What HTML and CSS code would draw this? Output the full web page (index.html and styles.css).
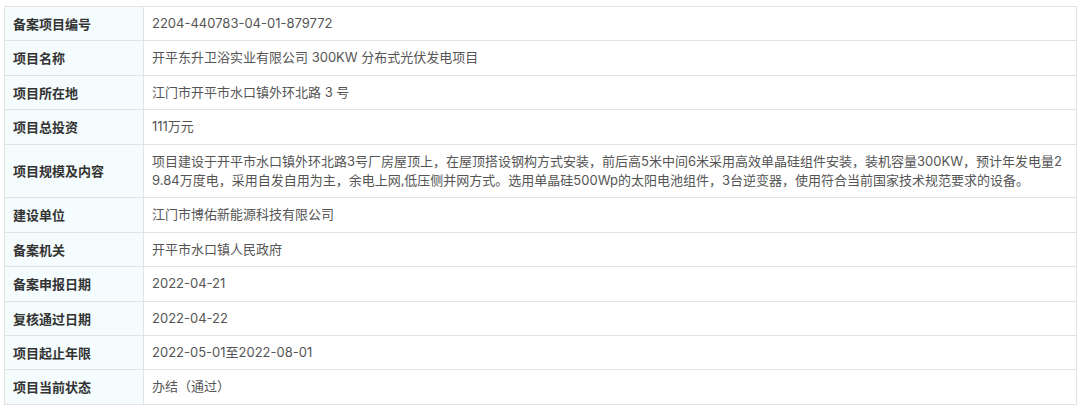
FILE: index.html
```html
<!DOCTYPE html>
<html>
<head>
  <meta charset="utf-8">
  <title>项目备案信息</title>
  <link rel="stylesheet" href="styles.css">
</head>
<body>
  <table class="info">
    <tr><th>备案项目编号</th><td>2204-440783-04-01-879772</td></tr>
    <tr><th>项目名称</th><td>开平东升卫浴实业有限公司 300KW 分布式光伏发电项目</td></tr>
    <tr><th>项目所在地</th><td>江门市开平市水口镇外环北路 3 号</td></tr>
    <tr><th>项目总投资</th><td>111万元</td></tr>
    <tr><th>项目规模及内容</th><td class="long">项目建设于开平市水口镇外环北路3号厂房屋顶上，在屋顶搭设钢构方式安装，前后高5米中间6米采用高效单晶硅组件安装，装机容量300KW，预计年发电量29.84万度电，采用自发自用为主，余电上网,低压侧并网方式。选用单晶硅500Wp的太阳电池组件，3台逆变器，使用符合当前国家技术规范要求的设备。</td></tr>
    <tr><th>建设单位</th><td>江门市博佑新能源科技有限公司</td></tr>
    <tr><th>备案机关</th><td>开平市水口镇人民政府</td></tr>
    <tr><th>备案申报日期</th><td>2022-04-21</td></tr>
    <tr><th>复核通过日期</th><td>2022-04-22</td></tr>
    <tr><th>项目起止年限</th><td>2022-05-01至2022-08-01</td></tr>
    <tr><th>项目当前状态</th><td>办结（通过）</td></tr>
  </table>
</body>
</html>
```

FILE: styles.css
```css
body {
  margin: 0;
  padding: 6px 3px 0 4px;
  background: #fff;
  font-family: Inter, "Noto Sans CJK SC", sans-serif;
  font-size: 13px;
}

.info {
  width: 100%;
  border-collapse: collapse;
  border: 1px solid #e3e3e3;
}

.info th, .info td {
  border: 1px solid #e3e3e3;
  padding: 7px 8px;
  line-height: 19.4px;
  text-align: left;
  vertical-align: middle;
}

.info th {
  width: 122px;
  background: #f5fcfd;
  color: #333;
  font-weight: bold;
  white-space: nowrap;
  font-family: "Noto Sans CJK SC", sans-serif;
}

.info td {
  color: #555;
}

.info .long {
  word-break: break-all;
}
```
